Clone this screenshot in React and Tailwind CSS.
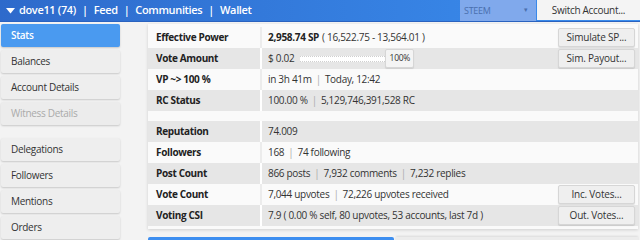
import React from "react";

const menu = [
  { label: "Stats", active: true },
  { label: "Balances" },
  { label: "Account Details" },
  { label: "Witness Details", disabled: true },
  { gap: true },
  { label: "Delegations" },
  { label: "Followers" },
  { label: "Mentions" },
  { label: "Orders" },
];

function Sep() {
  return <span className="mx-[4px] text-[#aaa]">|</span>;
}

function Btn({ children }) {
  return (
    <button className="h-[19px] w-[77px] rounded-[2px] border border-[#d6d6d6] bg-[#efefef] text-[10px] tracking-[-0.2px] text-[#333] shadow-[0_1px_1px_rgba(0,0,0,0.12)]">
      {children}
    </button>
  );
}

function Row({ label, gray, children, right }) {
  return (
    <div className={`flex h-[21px] items-center ${gray ? "bg-[#e6e6e6]" : "bg-[#fafafa]"}`}>
      <div className="w-[112px] pl-[8px] font-bold tracking-[-0.35px] text-[#222]">{label}</div>
      <div
        className={`flex h-full flex-1 items-center justify-between border-l-2 pl-[6px] pr-[3px] ${
          gray ? "border-white" : "border-[#ececec]"
        }`}
      >
        <div className="flex items-center">{children}</div>
        {right}
      </div>
    </div>
  );
}

export default function App() {
  return (
    <div
      className="h-[240px] w-[640px] overflow-hidden bg-[#f3f3f3] text-[10px] tracking-[-0.3px] text-[#333]"
      style={{ fontFamily: "'Open Sans', 'Noto Sans', sans-serif" }}
    >
      {/* Top bar */}
      <div className="flex h-[22px] items-stretch border-b border-[#2a62bf] bg-gradient-to-r from-[#2e6acb] to-[#3b8ff0] text-white">
        <div className="flex flex-1 items-center pl-[6px] text-[11px] font-semibold tracking-[-0.35px]">
          <svg width="9" height="6" viewBox="0 0 9 6" className="mr-[4px]">
            <path d="M0 0 H9 L4.5 5.5 Z" fill="#fff" />
          </svg>
          <span>dove11 (74)</span>
          <span className="mx-[6px]">|</span>
          <span>Feed</span>
          <span className="mx-[6px]">|</span>
          <span>Communities</span>
          <span className="mx-[6px]">|</span>
          <span>Wallet</span>
        </div>
        <div className="flex w-[76px] items-center justify-between bg-[#80a9ec] pl-[4px] pr-[8px] text-[9px] text-[#4a6fae]">
          <span>STEEM</span>
          <span className="text-[7px]">▾</span>
        </div>
        <div className="ml-[1px] flex h-[20px] w-[103px] items-center justify-center bg-[#f4f4f4] text-[10px] text-[#333]">
          Switch Account...
        </div>
      </div>

      <div className="flex">
        {/* Sidebar */}
        <div className="flex w-[120px] flex-col gap-[3px] pl-[1px] pt-[2px]">
          {menu.map((m, i) =>
            m.gap ? (
              <div key={i} className="h-[7px]" />
            ) : (
              <div
                key={i}
                className={`flex h-[23px] items-center rounded-[2px] pl-[10px] shadow-[0_1px_2px_rgba(0,0,0,0.18)] ${
                  m.active
                    ? "bg-[#4a9af0] font-semibold text-white"
                    : m.disabled
                    ? "bg-[#ececec] text-[#aaa]"
                    : "bg-[#eeeeee] text-[#333]"
                }`}
              >
                {m.label}
              </div>
            )
          )}
        </div>

        {/* Main */}
        <div className="ml-[28px] flex-1 pr-[2px] pt-[2px]">
          <div className="bg-[#fafafa] shadow-[0_1px_3px_rgba(0,0,0,0.15)]">
            <div className="pt-[3px]">
              <Row label="Effective Power" right={<Btn>Simulate SP...</Btn>}>
                <span className="font-bold text-[#222]">2,958.74 SP</span>
                <span className="ml-[3px]">( 16,522.75 - 13,564.01 )</span>
              </Row>
            </div>
            <Row label="Vote Amount" gray right={<Btn>Sim. Payout...</Btn>}>
              <span>$ 0.02</span>
              <div className="ml-[6px] h-[6px] w-[85px] border-y border-dotted border-[#d0d0d0] bg-white" />
              <div className="flex h-[19px] w-[29px] items-center justify-center rounded-[2px] border border-[#d6d6d6] bg-[#f4f4f4] text-[8.5px] shadow-[0_1px_1px_rgba(0,0,0,0.1)]">
                100%
              </div>
            </Row>
            <Row label="VP ~> 100 %">
              <span>in 3h 41m</span>
              <Sep />
              <span>Today, 12:42</span>
            </Row>
            <Row label="RC Status" gray>
              <span>100.00 %</span>
              <Sep />
              <span>5,129,746,391,528 RC</span>
            </Row>
            <div className="h-[10px] bg-[#fafafa]" />
            <Row label="Reputation" gray>
              <span>74.009</span>
            </Row>
            <Row label="Followers">
              <span>168</span>
              <Sep />
              <span>74 following</span>
            </Row>
            <Row label="Post Count" gray>
              <span>866 posts</span>
              <Sep />
              <span>7,932 comments</span>
              <Sep />
              <span>7,232 replies</span>
            </Row>
            <Row label="Vote Count" right={<Btn>Inc. Votes...</Btn>}>
              <span>7,044 upvotes</span>
              <Sep />
              <span>72,226 upvotes received</span>
            </Row>
            <Row label="Voting CSI" gray right={<Btn>Out. Votes...</Btn>}>
              <span>7.9 ( 0.00 % self, 80 upvotes, 53 accounts, last 7d )</span>
            </Row>
            <div className="h-[3px]" />
          </div>
          <div className="mt-[8px] flex gap-[2px]">
            <div className="h-[10px] w-[246px] rounded-t-[2px] bg-[#3d8ef0]" />
            <div className="h-[10px] flex-1 bg-[#ececec] shadow-[0_-1px_2px_rgba(0,0,0,0.1)]" />
          </div>
        </div>
      </div>
    </div>
  );
}
